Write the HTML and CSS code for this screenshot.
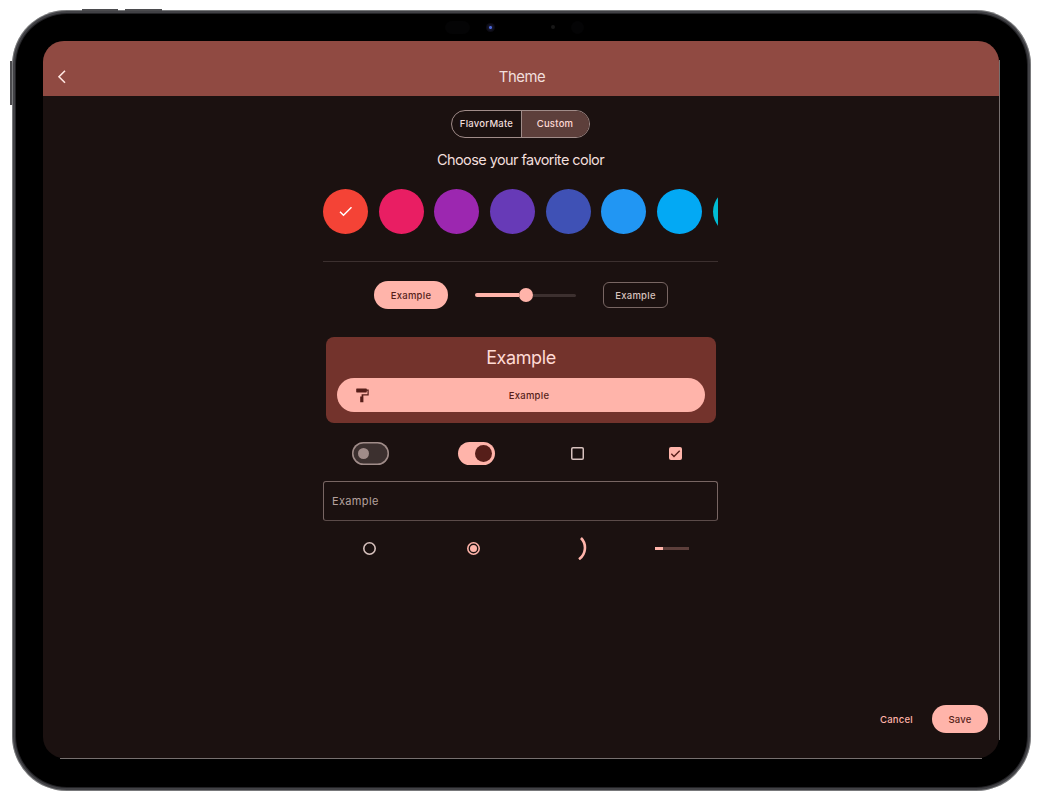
FILE: index.html
```html
<!DOCTYPE html>
<html lang="en">
<head>
<meta charset="utf-8">
<title>Theme</title>
<link rel="stylesheet" href="styles.css">
</head>
<body>
<div class="tablet">
  <i class="key key-up"></i><i class="key key-down"></i><i class="key key-power"></i>
  <i class="sensor sensor-wide"></i><i class="sensor camera"></i><i class="sensor mic"></i><i class="sensor sensor-round"></i>
  <div class="screen">
    <header class="appbar">
      <svg class="back" width="10" height="14" viewBox="0 0 10 14"><path d="M8 .8 2 6.800l6 6"/></svg>
      <h1 class="title">Theme</h1>
    </header>
    <main class="content">
      <div class="segments"><span class="segment">FlavorMate</span><span class="segment selected">Custom</span></div>
      <h2 class="prompt">Choose your favorite color</h2>
      <div class="swatches">
        <span class="swatch red"><svg width="14" height="11" viewBox="0 0 14 11"><path d="M1 5.8 4.5 9.2 12.5 1.2"/></svg></span>
        <span class="swatch pink"></span>
        <span class="swatch purple"></span>
        <span class="swatch violet"></span>
        <span class="swatch indigo"></span>
        <span class="swatch blue"></span>
        <span class="swatch sky"></span>
        <span class="swatch cyan"></span>
      </div>
      <hr class="divider">
      <div class="row buttons">
        <span class="button filled">Example</span>
        <span class="slider"><i class="slider-on"></i><i class="thumb"></i><i class="slider-off"></i></span>
        <span class="button outlined">Example</span>
      </div>
      <section class="card">
        <h3 class="card-title">Example</h3>
        <div class="card-button">
          <svg class="roller" width="13" height="15" viewBox="0 0 13 15"><path fill-rule="evenodd" d="M.8.4h9.400q.6 0 .6.6v.5h1.900v6H7.300v.9h.1v5.900H4.200V8.400h1.400V6.300h5.900V2.800h-.7v1q0 .6-.6.6H.8q-.6 0-.6-.6V1q0-.6.6-.6z"/></svg>
          <span class="card-label">Example</span>
        </div>
      </section>
      <div class="row toggles">
        <span class="switch"></span>
        <span class="switch on"></span>
        <span class="checkbox"></span>
        <span class="checkbox checked"><svg width="13" height="13" viewBox="0 0 13 13"><path d="m2.300 6.700 2.700 2.700 5.700-5.700"/></svg></span>
      </div>
      <div class="field">Example</div>
      <div class="row indicators">
        <span class="radio"></span>
        <span class="radio picked"></span>
        <svg class="spinner" width="10" height="24" viewBox="0 0 10 24"><path d="M4 2A14 14 0 0 1 2 23.200"/></svg>
        <span class="progress"><i class="progress-on"></i></span>
      </div>
    </main>
    <footer class="actions"><span class="cancel">Cancel</span><span class="button filled save">Save</span></footer>
  </div>
</div>
</body>
</html>
```
FILE: styles.css
```css
* { box-sizing: border-box; }
body {
  margin: 0;
  height: 800px;
  overflow: hidden;
  padding: 10px 0 0 12px;
  background: #fff;
  color: #f1dedc;
  font-family: Inter, "Liberation Sans", sans-serif;
}
h1, h2, h3 { margin: 0; font-weight: 400; }

/* Device shell, with thin highlights along the right and bottom screen edges */
.tablet {
  position: relative;
  width: 1019px;
  height: 781px;
  padding: 31px;
  border-radius: 55px;
  background:
    linear-gradient(#77706f, #77706f) 987px 50px / 1px 680px no-repeat,
    linear-gradient(#77706f, #77706f) 48px 748px / 922px 1px no-repeat,
    #000;
  box-shadow: inset 0 0 0 1px #77787a, inset 0 0 0 3px #414145, inset 0 0 0 4px #232326;
}
.key { position: absolute; background: #4b4b4e; }
.key-up { left: 70px; top: -1px; width: 36px; height: 2px; }
.key-down { left: 113px; top: -1px; width: 37px; height: 2px; }
.key-power { left: -2px; top: 51px; width: 2px; height: 44px; }
.sensor { position: absolute; border-radius: 8px; background: #040405; }
.sensor-wide { left: 433px; top: 11px; width: 25px; height: 13px; }
.camera { left: 474px; top: 13px; width: 9px; height: 9px; background: radial-gradient(circle, #4a67d8 0 1px, #15152b 2px, #0c0b13 4px); }
.mic { left: 539px; top: 15px; width: 4px; height: 4px; background: #171717; }
.sensor-round { left: 559px; top: 11px; width: 13px; height: 13px; }
.screen {
  display: flex;
  flex-direction: column;
  width: 956px;
  height: 717px;
  overflow: hidden;
  border-radius: 21px;
  background: #1b1110;
}

/* App bar */
.appbar {
  display: flex;
  align-items: center;
  height: 55px;
  flex: none;
  padding: 17px 13px 0 14px;
  background: #904a42;
}
.back { fill: none; stroke: #ffe5e0; stroke-width: 1.6; }
.title { flex: 1; margin-right: 9px; text-align: center; font-size: 14.800px; line-height: 20px; letter-spacing: -.45px; }

/* Theme preview */
.content { width: 395px; margin-left: 280px; padding-top: 14px; }
.segments {
  display: flex;
  width: 139px;
  height: 28px;
  margin: 0 auto 0 128px;
  overflow: hidden;
  border: 1px solid #a08c89;
  border-radius: 14px;
  font-size: 9.500px;
  font-weight: 500;
  letter-spacing: .25px;
  line-height: 26px;
  text-align: center;
}
.segment { width: 69px; }
.selected { flex: 1; padding-right: 1px; border-left: 1px solid #a08c89; background: #5d3f3b; color: #ffdad5; }
.prompt { margin-top: 12px; text-align: center; font-size: 14.500px; line-height: 20px; letter-spacing: -.57px; }
.swatches { display: flex; gap: 10.700px; margin-top: 19px; overflow: hidden; }
.swatch { display: flex; align-items: center; justify-content: center; flex: none; width: 45px; height: 45px; border-radius: 50%; }
.swatch svg { fill: none; stroke: #fff; stroke-width: 1.5; }
.red { background: #f44336; }
.pink { background: #e91e63; }
.purple { background: #9c27b0; }
.violet { background: #673ab7; }
.indigo { background: #3f51b5; }
.blue { background: #2196f3; }
.sky { background: #03a9f4; }
.cyan { background: #00bcd4; }
.divider { height: 1px; margin: 27px 0 0; border: 0; background: #3c302f; }
.row { display: flex; align-items: center; }
.buttons { height: 28px; margin-top: 19px; padding-left: 51px; }
.button {
  display: flex;
  align-items: center;
  justify-content: center;
  font-size: 9.500px;
  font-weight: 500;
  letter-spacing: .25px;
}
.filled { width: 74px; height: 28px; border-radius: 14px; background: #ffb4aa; color: #561e19; }
.outlined { width: 65px; height: 26px; margin-left: 27px; border: 1px solid #786663; border-radius: 6px; color: #d8c2be; }
.slider { display: flex; align-items: center; width: 101px; margin-left: 27px; }
.slider-on { width: 44px; height: 4px; border-radius: 2px 0 0 2px; background: #ffb4aa; }
.thumb { width: 14px; height: 14px; border-radius: 50%; background: #ffb4aa; }
.slider-off { flex: 1; height: 3px; border-radius: 0 2px 2px 0; background: #3c302f; }
.card { height: 86px; margin: 28px 2px 0 3px; padding: 9px 11px 11px; border-radius: 8px; background: #73332c; }
.card-title { text-align: center; font-size: 18px; line-height: 24px; letter-spacing: -.4px; color: #ffdad5; }
.card-button { display: flex; align-items: center; height: 34px; margin-top: 8px; padding: 0 16px 0 19px; border-radius: 17px; background: #ffb4aa; color: #561e19; }
.roller { fill: #561e19; }
.card-label { flex: 1; text-align: center; font-size: 9.500px; letter-spacing: .25px; font-weight: 500; }
.toggles { height: 23px; margin-top: 19px; padding-left: 29px; }
.switch { display: flex; align-items: center; width: 37px; height: 23px; padding-left: 6px; border-radius: 12px; background: #3c302f; box-shadow: inset 0 0 0 1.500px #a08c89; }
.switch::before { content: ""; width: 11px; height: 11px; border-radius: 50%; background: #a08c89; }
.on { margin-left: 69px; padding-left: 17px; background: #ffb4aa; box-shadow: none; }
.on::before { width: 17px; height: 17px; background: #561e19; }
.checkbox { width: 13px; height: 13px; margin-left: 76px; border-radius: 2px; box-shadow: inset 0 0 0 1.500px #d8c2be; }
.checked { display: flex; margin-left: 85px; background: #ffb4aa; box-shadow: none; }
.checked svg { fill: none; stroke: #561e19; stroke-width: 1.4; }
.field { height: 40px; margin-top: 16px; padding-left: 8px; border: 1px solid #786663; border-bottom-color: #5b4b49; border-radius: 3px; color: #b5a19e; font-size: 11px; letter-spacing: .35px; line-height: 38px; }
.indicators { height: 24px; margin-top: 15px; padding-left: 40px; }
.radio { display: flex; align-items: center; justify-content: center; width: 13px; height: 13px; border-radius: 50%; box-shadow: inset 0 0 0 1.600px #d8c2be; }
.picked { margin-left: 91px; box-shadow: inset 0 0 0 1.600px #ffb4aa; }
.picked::before { content: ""; width: 7px; height: 7px; border-radius: 50%; background: #ffb4aa; }
.spinner { margin-left: 97px; fill: none; stroke: #ffb4aa; stroke-width: 2.6; }
.progress { width: 34px; height: 3px; margin-left: 68px; background: #5d3f3b; }
.progress-on { display: block; width: 8px; height: 3px; background: #ffb4aa; }

/* Bottom actions */
.actions { display: flex; align-items: center; justify-content: flex-end; margin-top: auto; padding: 0 11px 25px; }
.cancel { margin-right: 19px; color: #ffb4aa; font-size: 9.500px; font-weight: 500; letter-spacing: .25px; }
.save { width: 56px; }
```
